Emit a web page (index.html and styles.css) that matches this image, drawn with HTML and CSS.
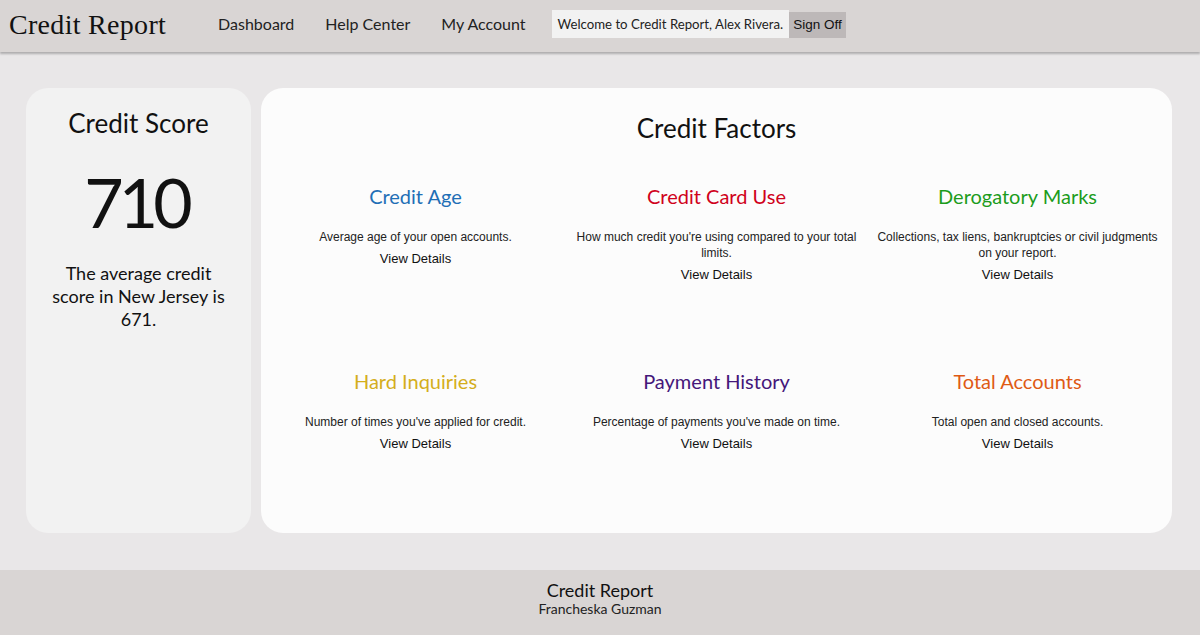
FILE: index.html
```html
<!DOCTYPE html>
<html lang="en">
<head>
<meta charset="utf-8">
<title>Credit Report</title>
<link rel="stylesheet" href="styles.css">
</head>
<body>
<header class="topbar">
  <div class="logo">Credit Report</div>
  <nav class="nav">
    <a class="nav-link" href="#">Dashboard</a>
    <a class="nav-link" href="#">Help Center</a>
    <a class="nav-link" href="#">My Account</a>
  </nav>
  <div class="welcome">
    <span class="welcome-text">Welcome to Credit Report, Alex Rivera.</span>
    <button class="signoff">Sign Off</button>
  </div>
</header>
<main class="main">
  <section class="score-card">
    <h2 class="score-title">Credit Score</h2>
    <div class="score-value">710</div>
    <p class="score-note">The average credit score in New Jersey is 671.</p>
  </section>
  <section class="factors-card">
    <h2 class="factors-title">Credit Factors</h2>
    <div class="factors-grid">
      <div class="factor">
        <h3 class="factor-name c-blue">Credit Age</h3>
        <p class="factor-desc">Average age of your open accounts.</p>
        <a class="factor-link" href="#">View Details</a>
      </div>
      <div class="factor">
        <h3 class="factor-name c-red">Credit Card Use</h3>
        <p class="factor-desc">How much credit you're using compared to your total limits.</p>
        <a class="factor-link" href="#">View Details</a>
      </div>
      <div class="factor">
        <h3 class="factor-name c-green">Derogatory Marks</h3>
        <p class="factor-desc">Collections, tax liens, bankruptcies or civil judgments on your report.</p>
        <a class="factor-link" href="#">View Details</a>
      </div>
      <div class="factor">
        <h3 class="factor-name c-gold">Hard Inquiries</h3>
        <p class="factor-desc">Number of times you've applied for credit.</p>
        <a class="factor-link" href="#">View Details</a>
      </div>
      <div class="factor">
        <h3 class="factor-name c-purple">Payment History</h3>
        <p class="factor-desc">Percentage of payments you've made on time.</p>
        <a class="factor-link" href="#">View Details</a>
      </div>
      <div class="factor">
        <h3 class="factor-name c-orange">Total Accounts</h3>
        <p class="factor-desc">Total open and closed accounts.</p>
        <a class="factor-link" href="#">View Details</a>
      </div>
    </div>
  </section>
</main>
<footer class="footer">
  <div class="footer-title">Credit Report</div>
  <div class="footer-author">Francheska Guzman</div>
</footer>
</body>
</html>
```
FILE: styles.css
```css
* { box-sizing: border-box; }
body {
  margin: 0;
  background: #e9e7e8;
  font-family: Lato, "Open Sans", sans-serif;
  color: #111;
}
.topbar {
  height: 52px;
  background: #d9d5d4;
  display: flex;
  align-items: center;
  padding-left: 9px;
  padding-bottom: 5px;
  box-shadow: 0 2px 2px rgba(0,0,0,0.25);
  position: relative;
}
.logo {
  font-family: "Liberation Serif", "DejaVu Serif", serif;
  font-size: 28px;
  line-height: 32px;
  color: #111;
  letter-spacing: 0.3px;
  margin-top: 3px;
}
.nav {
  display: flex;
  gap: 31px;
  margin-left: 52px;
}
.nav-link {
  color: #222;
  text-decoration: none;
  font-size: 16px;
}
.welcome {
  display: flex;
  align-items: flex-end;
  margin-left: 26px;
}
.welcome-text {
  background: #f2f2f2;
  height: 28px;
  line-height: 28px;
  padding: 0 6px;
  font-size: 13.2px;
  color: #222;
}
.signoff {
  background: #bdb8b8;
  border: 0;
  height: 26px;
  padding: 0 4px;
  font-family: "Liberation Sans", Arial, sans-serif;
  font-size: 13.5px;
  color: #111;
}
.main {
  display: flex;
  gap: 10px;
  padding: 36px 28px 37px 26px;
}
.score-card {
  width: 225px;
  height: 445px;
  background: #f2f2f2;
  border-radius: 22px;
  text-align: center;
  padding: 19px 20px 0;
}
.score-title {
  margin: 0;
  font-weight: 400;
  font-size: 26px;
  line-height: 32px;
}
.score-value {
  font-size: 68px;
  line-height: 80px;
  margin-top: 23px;
  letter-spacing: -5px;
  text-indent: -5px;
}
.score-note {
  margin: 20px 0 0;
  font-size: 18px;
  line-height: 23px;
}
.factors-card {
  flex: 1;
  height: 445px;
  background: #fcfcfc;
  border-radius: 22px;
  padding: 24px 4px 0;
  text-align: center;
}
.factors-title {
  margin: 0;
  font-weight: 400;
  font-size: 26px;
  line-height: 32px;
}
.factors-grid {
  display: grid;
  grid-template-columns: repeat(3, 1fr);
  grid-auto-rows: 185px;
  margin-top: 40px;
}
.factor {
  padding: 0 10px;
}
.factor-name {
  margin: 0;
  font-weight: 400;
  font-size: 20px;
  line-height: 24px;
}
.factor-desc {
  margin: 21px 0 0;
  font-family: "Liberation Sans", Arial, sans-serif;
  font-size: 12px;
  line-height: 16px;
  color: #222;
}
.factor-link {
  display: block;
  margin-top: 6px;
  font-family: "Liberation Sans", Arial, sans-serif;
  font-size: 13px;
  color: #111;
  text-decoration: none;
}
.c-blue { color: #1f6fb6; }
.c-red { color: #d0021b; }
.c-green { color: #1c9c1c; }
.c-gold { color: #d4ae1c; }
.c-purple { color: #45177a; }
.c-orange { color: #df5a14; }
.footer {
  background: #d9d5d4;
  height: 65px;
  text-align: center;
  padding-top: 9px;
}
.footer-title {
  font-size: 18px;
  line-height: 22px;
}
.footer-author {
  font-size: 14px;
  line-height: 16px;
  color: #222;
}
```
